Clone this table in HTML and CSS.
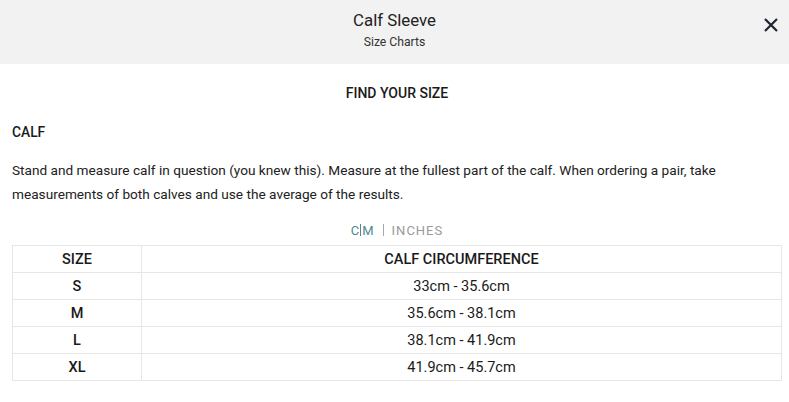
FILE: index.html
```html
<!DOCTYPE html>
<html>
<head>
<meta charset="utf-8">
<link rel="stylesheet" href="styles.css">
</head>
<body>
<div class="modal">
  <header class="head">
    <div class="title">Calf Sleeve</div>
    <div class="subtitle">Size Charts</div>
    <button class="close" aria-label="Close">
      <svg width="14" height="14" viewBox="0 0 14 14"><path d="M1 1L13 13M13 1L1 13" stroke="#1f2430" stroke-width="2.2" fill="none"/></svg>
    </button>
  </header>
  <main class="content">
    <h2 class="find">FIND YOUR SIZE</h2>
    <h3 class="section">CALF</h3>
    <p class="desc">Stand and measure calf in question (you knew this). Measure at the fullest part of the calf. When ordering a pair, take measurements of both calves and use the average of the results.</p>
    <div class="units"><span class="unit active">C<span class="caret"></span>M</span><span class="sep"></span><span class="unit">INCHES</span></div>
    <table class="chart">
      <thead>
        <tr><th class="c1">SIZE</th><th>CALF CIRCUMFERENCE</th></tr>
      </thead>
      <tbody>
        <tr><td class="c1 b">S</td><td>33cm - 35.6cm</td></tr>
        <tr><td class="c1 b">M</td><td>35.6cm - 38.1cm</td></tr>
        <tr><td class="c1 b">L</td><td>38.1cm - 41.9cm</td></tr>
        <tr><td class="c1 b">XL</td><td>41.9cm - 45.7cm</td></tr>
      </tbody>
    </table>
  </main>
</div>
</body>
</html>
```
FILE: styles.css
```css
* { box-sizing: border-box; }
html, body { margin: 0; padding: 0; background: #fff; }
body { font-family: Roboto, "Liberation Sans", sans-serif; color: #1a1a1a; }
.head {
  position: relative;
  background: #f2f2f2;
  height: 64px;
  display: flex;
  flex-direction: column;
  align-items: center;
  padding-top: 8px;
}
.title { font-size: 16.8px; line-height: 22px; color: #222; margin-top: 1px; }
.subtitle { font-size: 12.2px; line-height: 20px; color: #333; margin-top: 1px; }
.close {
  position: absolute;
  right: 11px;
  top: 18px;
  width: 14px; height: 14px;
  padding: 0; border: 0; background: none;
  display: block;
}
.close svg { display: block; }
.content { padding: 0 7px 0 12px; }
.find {
  margin: 0;
  padding-top: 20px;
  text-align: center;
  font-size: 14px;
  font-weight: 500;
  line-height: 18px;
}
.section {
  margin: 21px 0 0;
  font-size: 13.8px;
  font-weight: 500;
  line-height: 18px;
}
.desc {
  margin: 17px 0 0;
  font-size: 13.65px;
  line-height: 24px;
  color: #222;
}
.units {
  display: flex;
  justify-content: center;
  align-items: center;
  gap: 8px;
  margin-top: 15px;
  height: 18px;
  font-size: 13px;
  letter-spacing: 1px;
}
.unit { color: #9a9a9a; font-weight: 400; }
.unit.active { color: #4f8a8b; }
.caret { display: inline-block; width: 1px; height: 12px; background: #4f8a8b; vertical-align: -1px; margin: 0 1px 0 0; }
.sep { width: 1px; height: 12px; background: #a8a8a8; }
.chart {
  margin-top: 6px;
  width: 770px;
  border-collapse: collapse;
  font-size: 14.5px;
}
.chart th, .chart td {
  border: 1px solid #e6e6e6;
  height: 27px;
  padding: 0;
  text-align: center;
  font-weight: 400;
}
.chart th { font-weight: 500; }
.chart .c1 { width: 129px; }
.chart td.b { font-weight: 500; }
```
